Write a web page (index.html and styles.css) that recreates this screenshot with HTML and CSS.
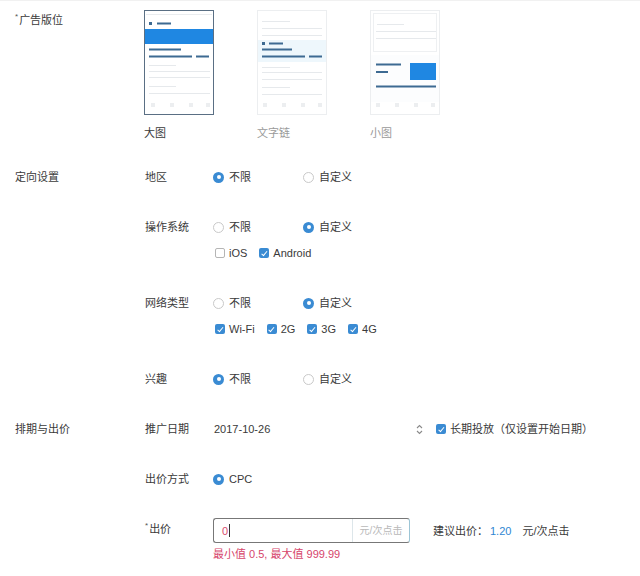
FILE: index.html
```html
<!DOCTYPE html>
<html lang="zh">
<head>
<meta charset="utf-8">
<title>广告设置</title>
<link rel="stylesheet" href="styles.css">
</head>
<body>
<div class="form">
  <section class="sec sec-ad">
    <div class="sec-label"><span class="req">*</span>广告版位</div>
    <div class="cards">
      <div class="card">
        <svg class="thumb" width="70" height="105" viewBox="0 0 70 105">
          <rect x="0.5" y="0.5" width="69" height="104" fill="#fff" stroke="#5a6f84"/>
          <rect x="2" y="4" width="66" height="1" fill="#e9ecef"/>
          <rect x="5" y="12" width="3" height="3" fill="#3d6a92"/>
          <rect x="13" y="12.5" width="14" height="2" fill="#3d6a92"/>
          <rect x="1" y="19" width="68" height="15" fill="#1f87e2"/>
          <rect x="5" y="38.5" width="32" height="2" fill="#3d6a92"/>
          <rect x="5" y="45.5" width="43" height="2" fill="#3d6a92"/>
          <rect x="52" y="45.5" width="13" height="2" fill="#3d6a92"/>
          <rect x="5" y="55" width="27" height="1" fill="#e6e9ec"/>
          <rect x="5" y="61" width="61" height="1" fill="#e6e9ec"/>
          <rect x="5" y="67" width="61" height="1" fill="#e6e9ec"/>
          <rect x="5" y="76" width="27" height="1" fill="#e6e9ec"/>
          <rect x="5" y="83" width="61" height="1" fill="#e6e9ec"/>
          <rect x="7" y="93" width="4" height="4" fill="#eceef0"/>
          <rect x="26" y="93" width="4" height="4" fill="#eceef0"/>
          <rect x="45" y="93" width="4" height="4" fill="#eceef0"/>
          <rect x="62" y="93" width="4" height="4" fill="#eceef0"/>
        </svg>
        <div class="card-name">大图</div>
      </div>
      <div class="card muted">
        <svg class="thumb" width="70" height="105" viewBox="0 0 70 105">
          <rect x="0.5" y="0.5" width="69" height="104" fill="#fff" stroke="#eceef0"/>
          <rect x="5" y="11" width="28" height="1" fill="#e6e9ec"/>
          <rect x="5" y="18" width="60" height="1" fill="#e6e9ec"/>
          <rect x="5" y="25" width="60" height="1" fill="#e6e9ec"/>
          <rect x="1" y="30" width="68" height="22" fill="#eef7fc"/>
          <rect x="5" y="32" width="3" height="3" fill="#3d6a92"/>
          <rect x="12" y="32.5" width="14" height="2" fill="#3d6a92"/>
          <rect x="5" y="38.5" width="30" height="2" fill="#3d6a92"/>
          <rect x="5" y="45.5" width="43" height="2" fill="#3d6a92"/>
          <rect x="52" y="45.5" width="13" height="2" fill="#3d6a92"/>
          <rect x="5" y="57" width="28" height="1" fill="#e6e9ec"/>
          <rect x="5" y="62" width="60" height="1" fill="#e6e9ec"/>
          <rect x="5" y="69" width="60" height="1" fill="#e6e9ec"/>
          <rect x="5" y="77" width="28" height="1" fill="#e6e9ec"/>
          <rect x="5" y="84" width="60" height="1" fill="#e6e9ec"/>
          <rect x="6" y="93" width="4" height="4" fill="#eceef0"/>
          <rect x="25" y="93" width="4" height="4" fill="#eceef0"/>
          <rect x="44" y="93" width="4" height="4" fill="#eceef0"/>
          <rect x="61" y="93" width="4" height="4" fill="#eceef0"/>
        </svg>
        <div class="card-name">文字链</div>
      </div>
      <div class="card muted">
        <svg class="thumb" width="70" height="105" viewBox="0 0 70 105">
          <rect x="0.5" y="0.5" width="69" height="104" fill="#fff" stroke="#eceef0"/>
          <rect x="3.5" y="3.5" width="63" height="38" fill="#fff" stroke="#eef0f2"/>
          <rect x="7" y="14" width="27" height="1" fill="#e6e9ec"/>
          <rect x="6" y="21" width="60" height="1" fill="#e6e9ec"/>
          <rect x="6" y="28" width="60" height="1" fill="#e6e9ec"/>
          <rect x="1" y="45" width="68" height="47" fill="#fcfdfe"/>
          <rect x="6" y="53.5" width="25" height="2" fill="#3d6a92"/>
          <rect x="6" y="61" width="12" height="2" fill="#3d6a92"/>
          <rect x="40" y="53" width="26" height="17" fill="#1f87e2"/>
          <rect x="6" y="75.5" width="60" height="2" fill="#3d6a92"/>
          <rect x="6" y="93" width="4" height="4" fill="#eceef0"/>
          <rect x="25" y="93" width="4" height="4" fill="#eceef0"/>
          <rect x="44" y="93" width="4" height="4" fill="#eceef0"/>
          <rect x="61" y="93" width="4" height="4" fill="#eceef0"/>
        </svg>
        <div class="card-name">小图</div>
      </div>
    </div>
  </section>

  <section class="sec">
    <div class="sec-label">定向设置</div>
    <div class="fields">
      <div class="field">
        <div class="field-label">地区</div>
        <div class="field-body">
          <div class="opts">
            <span class="opt"><span class="radio on"></span>不限</span>
            <span class="opt"><span class="radio"></span>自定义</span>
          </div>
        </div>
      </div>
      <div class="field">
        <div class="field-label">操作系统</div>
        <div class="field-body">
          <div class="opts">
            <span class="opt"><span class="radio"></span>不限</span>
            <span class="opt"><span class="radio on"></span>自定义</span>
          </div>
          <div class="checks">
            <span class="chk-item"><span class="check"></span>iOS</span>
            <span class="chk-item"><span class="check on"></span>Android</span>
          </div>
        </div>
      </div>
      <div class="field">
        <div class="field-label">网络类型</div>
        <div class="field-body">
          <div class="opts">
            <span class="opt"><span class="radio"></span>不限</span>
            <span class="opt"><span class="radio on"></span>自定义</span>
          </div>
          <div class="checks">
            <span class="chk-item"><span class="check on"></span>Wi-Fi</span>
            <span class="chk-item"><span class="check on"></span>2G</span>
            <span class="chk-item"><span class="check on"></span>3G</span>
            <span class="chk-item"><span class="check on"></span>4G</span>
          </div>
        </div>
      </div>
      <div class="field">
        <div class="field-label">兴趣</div>
        <div class="field-body">
          <div class="opts">
            <span class="opt"><span class="radio on"></span>不限</span>
            <span class="opt"><span class="radio"></span>自定义</span>
          </div>
        </div>
      </div>
    </div>
  </section>

  <section class="sec">
    <div class="sec-label">排期与出价</div>
    <div class="fields">
      <div class="field">
        <div class="field-label">推广日期</div>
        <div class="field-body row">
          <div class="date-input">
            <span>2017-10-26</span>
            <svg class="spinner" width="7" height="11" viewBox="0 0 7 11"><path d="M1 4 L3.5 1.5 L6 4 M1 7 L3.5 9.5 L6 7" fill="none" stroke="#8a8a8a" stroke-width="1.1"/></svg>
          </div>
          <span class="chk-item long"><span class="check on"></span>长期投放（仅设置开始日期）</span>
        </div>
      </div>
      <div class="field">
        <div class="field-label">出价方式</div>
        <div class="field-body">
          <div class="opts">
            <span class="opt"><span class="radio on"></span>CPC</span>
          </div>
        </div>
      </div>
      <div class="field">
        <div class="field-label"><span class="req">*</span>出价</div>
        <div class="field-body">
          <div class="row bid-row">
            <div class="bid-input">
              <span class="bid-value">0<span class="caret"></span></span>
              <span class="bid-addon">元/次点击</span>
            </div>
            <span class="suggest">建议出价：<span class="num">1.20</span><span class="unit">元/次点击</span></span>
          </div>
          <div class="error">最小值 0.5, 最大值 999.99</div>
        </div>
      </div>
    </div>
  </section>
</div>
</body>
</html>
```

FILE: styles.css
```css
html, body {
  margin: 0;
  padding: 0;
  background: #fff;
}
body {
  font-family: "Liberation Sans", "Noto Sans CJK SC", sans-serif;
  font-size: 11px;
  line-height: 20px;
  color: #3a3a3a;
  border-top: 1px solid #f1f1f1;
}
.form {
  padding: 9px 0 0 15px;
  display: flex;
  flex-direction: column;
  gap: 30px;
}
.sec {
  display: grid;
  grid-template-columns: 130px 1fr;
}
.sec-ad {
  margin-bottom: -6px;
}
.req {
  font-size: 8px;
  vertical-align: top;
  line-height: 14px;
  margin-right: 1px;
  color: #555;
}
.cards {
  display: flex;
  gap: 43px;
  margin-left: -1px;
}
.card {
  display: flex;
  flex-direction: column;
  width: 70px;
}
.thumb {
  display: block;
}
.card-name {
  margin-top: 8px;
  color: #3a3a3a;
}
.card.muted .card-name {
  color: #9a9a9a;
}
.fields {
  display: flex;
  flex-direction: column;
  gap: 30px;
}
.field {
  display: grid;
  grid-template-columns: 68px 1fr;
}
.field-label {
  color: #3a3a3a;
}
.opts {
  display: flex;
}
.opt {
  display: flex;
  align-items: center;
  width: 90px;
}
.radio {
  width: 11px;
  height: 11px;
  box-sizing: border-box;
  border: 1px solid #c9c9c9;
  border-radius: 50%;
  margin-right: 5px;
  background: #fff;
  position: relative;
}
.radio.on {
  border: none;
  background: #3a8bd3;
}
.radio.on::after {
  content: "";
  position: absolute;
  left: 3.5px;
  top: 3.5px;
  width: 4px;
  height: 4px;
  border-radius: 50%;
  background: #fff;
}
.checks {
  display: flex;
  margin-top: 6px;
}
.chk-item {
  display: flex;
  align-items: center;
  margin-right: 12px;
}
.checks .chk-item:first-child {
  margin-left: 2px;
}
.check {
  width: 10px;
  height: 10px;
  box-sizing: border-box;
  border: 1px solid #b5b5b5;
  border-radius: 2px;
  margin-right: 4px;
  background: #fff;
  position: relative;
}
.check.on {
  border: none;
  background: #3a8bd3;
}
.check.on::after {
  content: "";
  position: absolute;
  left: 3.5px;
  top: 1.5px;
  width: 2px;
  height: 4.5px;
  border: solid #fff;
  border-width: 0 1.3px 1.3px 0;
  transform: rotate(40deg);
}
.row {
  display: flex;
  align-items: center;
}
.date-input {
  width: 210px;
  display: flex;
  justify-content: space-between;
  align-items: center;
  padding-left: 1px;
  box-sizing: border-box;
}
.spinner {
  display: block;
}
.chk-item.long {
  margin-left: 13px;
}
.bid-row {
  margin-top: -1px;
  margin-bottom: -2px;
}
.bid-input {
  display: flex;
  width: 197px;
  height: 25px;
  box-sizing: border-box;
  border: 1px solid #777;
  border-right-color: #9cc5d6;
  border-radius: 3px;
  overflow: hidden;
}
.bid-value {
  flex: 1;
  display: flex;
  align-items: center;
  padding-left: 8px;
  color: #d84a6d;
}
.caret {
  display: inline-block;
  width: 1px;
  height: 13px;
  background: #333;
  margin-left: 1px;
}
.bid-addon {
  width: 56px;
  display: flex;
  align-items: center;
  justify-content: center;
  border-left: 1px solid #dde6ea;
  color: #b9b9b9;
  font-size: 10px;
}
.suggest {
  margin-left: 23px;
  color: #3a3a3a;
}
.suggest .num {
  color: #2f86d2;
  margin-left: 2px;
}
.suggest .unit {
  margin-left: 11px;
}
.error {
  margin-top: 4px;
  line-height: 18px;
  color: #d6446b;
}
```
